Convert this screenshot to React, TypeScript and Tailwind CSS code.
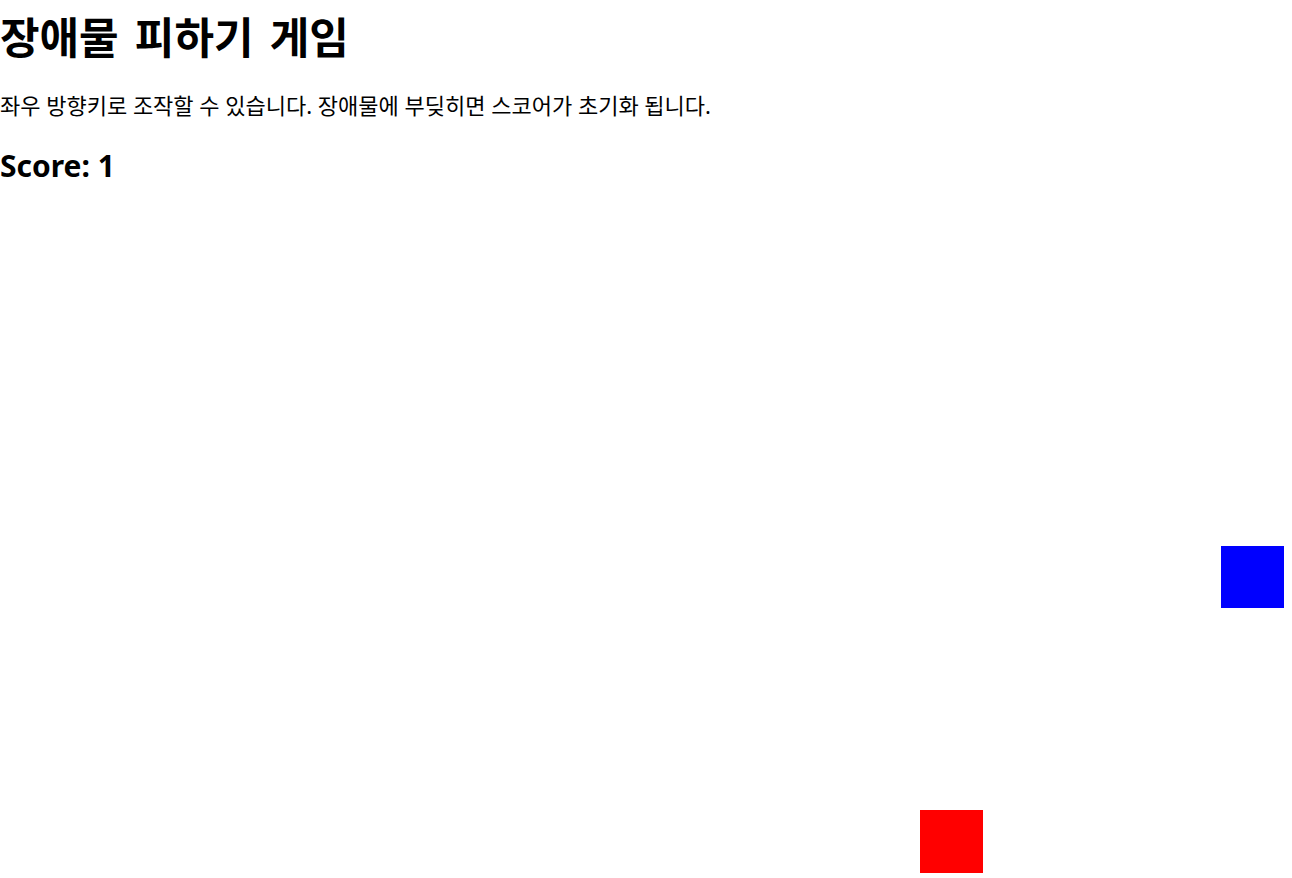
export default function App() {
  const font = { fontFamily: '"Noto Sans", "Noto Sans CJK KR", sans-serif' }
  return (
    <div className="relative h-[878px] w-full overflow-hidden bg-white text-black" style={font}>
      <h1 className="mt-[10px] text-[43px] font-bold leading-[56px] [word-spacing:5px]">장애물 피하기 게임</h1>
      <p className="mt-[24px] text-[22px] leading-[30px]">
        좌우 방향키로 조작할 수 있습니다. 장애물에 부딪히면 스코어가 초기화 됩니다.
      </p>
      <h2 className="mt-[26px] text-[30px] font-bold leading-[40px]">Score: 1</h2>

      {/* 떨어지는 장애물 */}
      <div className="absolute left-[1221px] top-[546px] h-[62px] w-[63px] bg-[#0000ff]" />
      {/* 플레이어 */}
      <div className="absolute left-[920px] top-[810px] h-[63px] w-[63px] bg-[#ff0000]" />
    </div>
  )
}
